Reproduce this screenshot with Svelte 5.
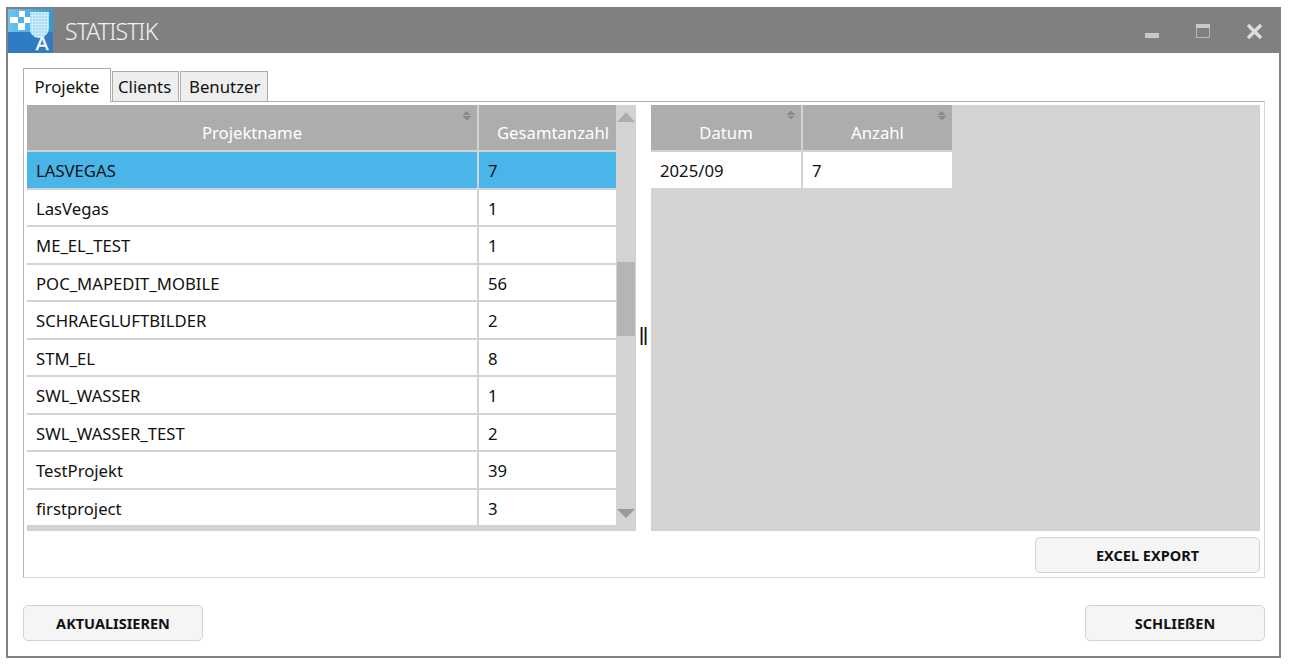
<script>
  const projects = [
    ["LASVEGAS", 7],
    ["LasVegas", 1],
    ["ME_EL_TEST", 1],
    ["POC_MAPEDIT_MOBILE", 56],
    ["SCHRAEGLUFTBILDER", 2],
    ["STM_EL", 8],
    ["SWL_WASSER", 1],
    ["SWL_WASSER_TEST", 2],
    ["TestProjekt", 39],
    ["firstproject", 3]
  ];
  const tabs = ["Projekte", "Clients", "Benutzer"];
</script>

<div class="window">
  <header class="titlebar">
    <svg class="logo" width="45" height="44" viewBox="0 0 45 44">
      <defs>
        <linearGradient id="sky" x1="0" y1="0" x2="1" y2="0">
          <stop offset="0" stop-color="#6cc4ee" />
          <stop offset="1" stop-color="#2f9ad8" />
        </linearGradient>
        <pattern id="mesh" width="3" height="3" patternUnits="userSpaceOnUse">
          <path d="M0 0H3M0 0V3" stroke="#eef9fe" stroke-width="1" fill="none" />
        </pattern>
      </defs>
      <rect width="45" height="44" fill="#2f7cc4" />
      <rect width="45" height="23" fill="url(#sky)" />
      <path d="M22 3H41V18C41 25 36 29 31 29C27 29 24 26 22 23Z" fill="#a6dcf5" />
      <path d="M22 3H41V18C41 25 36 29 31 29C27 29 24 26 22 23Z" fill="url(#mesh)" />
      <path d="M11 2H17V8H22V14H17V21H10V14H2V8H11Z" fill="#fff" />
      <rect x="10" y="8" width="6" height="6" fill="#4fb5e8" />
      <text x="34" y="41" class="logo-a">A</text>
    </svg>
    <span class="title">STATISTIK</span>
    <div class="controls">
      <svg width="14" height="5" viewBox="0 0 14 5" class="min"><rect width="14" height="5" fill="#c9c9c9" /></svg>
      <svg width="14" height="14" viewBox="0 0 14 14" class="max">
        <rect x="0.5" y="0.5" width="13" height="13" fill="none" stroke="#b9b9b9" />
        <rect width="14" height="4" fill="#c9c9c9" />
      </svg>
      <svg width="17" height="17" viewBox="0 0 17 17" class="close">
        <path d="M2 2L15 15M15 2L2 15" stroke="#dcdcdc" stroke-width="3.4" />
      </svg>
    </div>
  </header>

  <main class="content">
    <nav class="tabs">
      {#each tabs as tab, i}
        <div class="tab" class:active={i === 0}>{tab}</div>
      {/each}
    </nav>

    <section class="panel">
      <div class="grids">
        <div class="grid-left">
          <div class="table">
            <div class="row head cols-left">
              <div class="cell">Projektname<i class="sort"></i></div>
              <div class="cell total">Gesamtanzahl<i class="sort"></i></div>
            </div>
            {#each projects as p, i}
              <div class="row cols-left" class:selected={i === 0}>
                <div class="cell">{p[0]}</div>
                <div class="cell">{p[1]}</div>
              </div>
            {/each}
          </div>
          <div class="scrollbar">
            <div class="arrow up"></div>
            <div class="thumb"></div>
            <div class="arrow down"></div>
          </div>
        </div>

        <div class="splitter"><b></b><b></b></div>

        <div class="grid-right">
          <div class="row head cols-right">
            <div class="cell">Datum<i class="sort"></i></div>
            <div class="cell">Anzahl<i class="sort"></i></div>
          </div>
          <div class="row cols-right">
            <div class="cell">2025/09</div>
            <div class="cell">7</div>
          </div>
        </div>
      </div>
      <div class="export">
        <button class="btn wide">EXCEL EXPORT</button>
      </div>
    </section>

    <footer class="actions">
      <button class="btn">AKTUALISIEREN</button>
      <button class="btn">SCHLIEßEN</button>
    </footer>
  </main>
</div>

<style>
  :global(body) {
    margin: 0;
    background: #fff;
  }

  .window {
    box-sizing: border-box;
    width: 1275px;
    height: 651px;
    margin: 7px 0 0 6px;
    border: 2px solid #808080;
    border-top: 0;
    font-family: "Noto Sans", "Open Sans", sans-serif;
    color: #111;
    background: #fff;
  }

  .titlebar {
    display: flex;
    align-items: center;
    height: 46px;
    margin: 0 -2px;
    padding-left: 2px;
    background: #808080;
  }

  .logo {
    align-self: flex-end;
    flex: none;
  }

  .logo-a {
    font: 400 19px "Liberation Sans", sans-serif;
    fill: #fff;
    stroke: #fff;
    stroke-width: 0.4;
    text-anchor: middle;
  }

  .title {
    margin-left: 12px;
    padding-top: 2px;
    font-size: 23px;
    font-weight: 300;
    letter-spacing: -0.9px;
    color: #f2f2f2;
  }

  .controls {
    display: flex;
    align-items: flex-start;
    align-self: flex-start;
    margin-left: auto;
    margin-right: 18px;
  }

  .controls svg {
    display: block;
  }

  .min {
    margin-top: 26px;
  }

  .max {
    margin: 17px 36px 0 37px;
  }

  .close {
    margin-top: 16px;
  }

  .content {
    padding: 15px 14px 0 15px;
  }

  .tabs {
    display: flex;
    align-items: flex-end;
    gap: 1px;
    height: 33px;
  }

  .tab {
    box-sizing: border-box;
    height: 30px;
    padding: 0 8px;
    border: 1px solid #acacac;
    border-bottom: 0;
    background: #eeeeee;
    font-size: 16.8px;
    line-height: 30px;
  }

  .tab.active {
    position: relative;
    z-index: 1;
    width: 88px;
    height: 34px;
    margin-bottom: -1px;
    padding: 0;
    background: #fff;
    text-align: center;
    line-height: 35px;
  }

  .tab:nth-child(2) {
    width: 67px;
    padding: 0 5px;
  }

  .tab:nth-child(3) {
    width: 88px;
  }

  .panel {
    box-sizing: border-box;
    height: 477px;
    padding: 3px 4px 0 3px;
    border: 1px solid #d6d6d6;
    border-top-color: #acacac;
    border-left-color: #b4b4b4;
  }

  .grids {
    display: flex;
    height: 426px;
  }

  .grid-left {
    display: flex;
    flex: none;
    width: 609px;
    background: #d3d3d3;
  }

  .table {
    flex: none;
    width: 589px;
    overflow: hidden;
  }

  .row {
    display: grid;
    grid-template-rows: 35.5px;
    column-gap: 2px;
    box-sizing: border-box;
    height: 37.5px;
    border-bottom: 2px solid #d3d3d3;
    background: #d3d3d3;
    font-size: 16.7px;
  }

  .cols-left {
    grid-template-columns: 450px 148px;
    width: 600px;
  }

  .cols-right {
    grid-template-columns: 150px 149px;
  }

  .cell {
    position: relative;
    box-sizing: border-box;
    padding: 1px 0 0 9px;
    background: #fff;
    line-height: 36px;
    white-space: nowrap;
  }

  .row.selected .cell {
    background: #4ab5e8;
  }

  .row.head {
    grid-template-rows: 45px;
    height: 47px;
  }

  .head .cell {
    padding: 10px 0 0;
    background: #adadad;
    color: #fff;
    text-align: center;
  }

  .sort {
    position: absolute;
    top: 6px;
    right: 6px;
    width: 8px;
    height: 9px;
    background:
      linear-gradient(135deg, transparent 50%, #8a8a8a 50%) 0 0 / 4px 4px no-repeat,
      linear-gradient(225deg, transparent 50%, #8a8a8a 50%) 4px 0 / 4px 4px no-repeat,
      linear-gradient(45deg, transparent 50%, #8a8a8a 50%) 0 5px / 4px 4px no-repeat,
      linear-gradient(315deg, transparent 50%, #8a8a8a 50%) 4px 5px / 4px 4px no-repeat;
  }

  .total .sort {
    right: 3px;
  }

  .scrollbar {
    position: relative;
    display: flex;
    flex-direction: column;
    align-items: center;
    flex: none;
    width: 20px;
  }

  .arrow {
    width: 0;
    height: 0;
    border-left: 9px solid transparent;
    border-right: 9px solid transparent;
  }

  .arrow.up {
    margin-top: 7px;
    border-bottom: 10px solid #adadad;
  }

  .arrow.down {
    margin-top: 173px;
    border-top: 9px solid #999;
  }

  .thumb {
    width: 18px;
    height: 74px;
    margin-top: 140px;
    background: #b5b5b5;
  }

  .splitter {
    display: flex;
    align-items: center;
    justify-content: center;
    gap: 1px;
    flex: none;
    width: 15px;
    padding-top: 36px;
    box-sizing: border-box;
  }

  .splitter b {
    box-sizing: border-box;
    width: 3px;
    height: 18px;
    background: #1c1c1c;
    border-left: 1px solid #e5a45a;
    border-right: 1px solid #3f8fd8;
  }

  .grid-right {
    flex: none;
    width: 609px;
    background: #d3d3d3;
  }

  .export {
    display: flex;
    justify-content: flex-end;
    margin-top: 6px;
  }

  .actions {
    display: flex;
    justify-content: space-between;
    margin-top: 27px;
  }

  .btn {
    box-sizing: border-box;
    width: 180px;
    height: 36px;
    border: 1px solid #d2d2d2;
    border-radius: 5px;
    background: #f5f5f5;
    color: #111;
    font-family: "Noto Sans", "Open Sans", sans-serif;
    font-size: 14.5px;
    font-weight: 700;
  }

  .btn.wide {
    width: 225px;
  }
</style>
